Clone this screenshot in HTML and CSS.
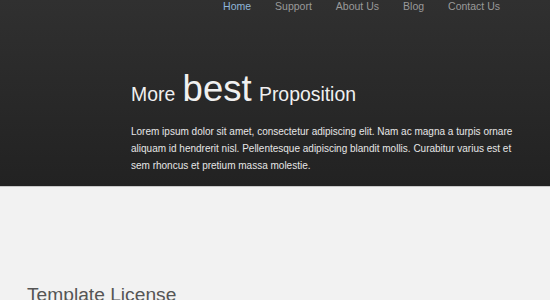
FILE: index.html
```html
<!DOCTYPE html>
<html lang="en">
<head>
    <meta charset="UTF-8">
    <title>More best Proposition</title>
    <link rel="stylesheet" href="styles.css">
</head>
<body>
    <div class="header">
        <ul class="nav">
            <li><a href="#" class="active">Home</a></li>
            <li><a href="#">Support</a></li>
            <li><a href="#">About Us</a></li>
            <li><a href="#">Blog</a></li>
            <li><a href="#">Contact Us</a></li>
        </ul>

        <div class="hero">
            <h2>More <span class="big">best</span> Proposition</h2>
            <p>Lorem ipsum dolor sit amet, consectetur adipiscing elit. Nam ac magna a turpis ornare aliquam id hendrerit nisl. Pellentesque adipiscing blandit mollis. Curabitur varius est et sem rhoncus et pretium massa molestie.</p>
        </div>
    </div>

    <div class="content">
        <h3>Template License</h3>
    </div>
</body>
</html>
```

FILE: styles.css
```css
/* Base */
body {
    margin: 0;
    font-family: "Liberation Sans", Arial, sans-serif;
    background-color: #f2f2f2;
    color: #555;
}

/* Cabecera oscura */
.header {
    background: linear-gradient(to bottom, #303030, #222222);
    border-bottom: 1px solid #c8c8c8;
    height: 186px;
}

/* Menu */
.nav {
    list-style: none;
    margin: 0;
    padding: 0 50px 0 0;
    display: flex;
    justify-content: flex-end;
    gap: 24px;
    height: 20px;
}

.nav a {
    display: block;
    font-size: 10.5px;
    line-height: 13px;
    color: #9a9a9a;
    text-decoration: none;
}

.nav a.active {
    color: #8fb6d9;
}

/* Bloque principal */
.hero {
    padding: 51px 28px 0 131px;
    color: #f0f0f0;
}

.hero h2 {
    margin: 0;
    font-size: 19.4px;
    font-weight: normal;
    line-height: 36px;
}

.hero .big {
    font-size: 36.5px;
    margin: 0 2px;
}

.hero p {
    margin: 11px 0 0;
    font-size: 10px;
    line-height: 17px;
    color: #e6e6e6;
}

/* Contenido */
.content {
    padding: 97px 27px 0;
}

.content h3 {
    margin: 0;
    font-size: 19.2px;
    font-weight: normal;
    color: #555;
}
```
